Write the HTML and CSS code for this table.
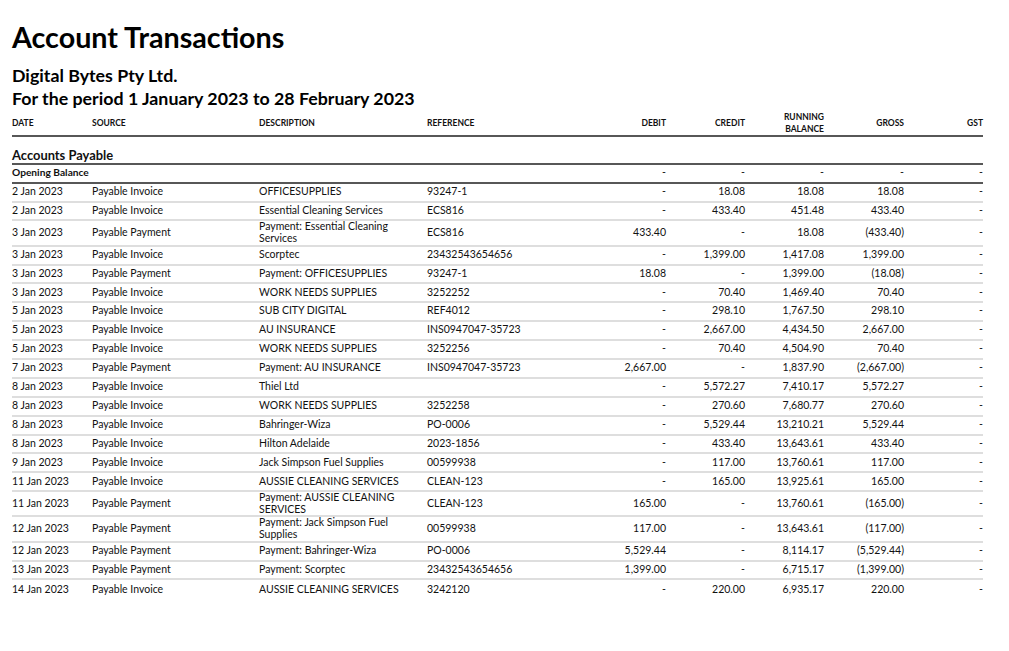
FILE: index.html
```html
<!DOCTYPE html>
<html lang="en">
<head>
<meta charset="utf-8">
<title>Account Transactions</title>
<link rel="stylesheet" href="styles.css">
</head>
<body>
<div class="report">
  <h1 class="title">Account Transactions</h1>
  <div class="subtitle">Digital Bytes Pty Ltd.</div>
  <div class="subtitle">For the period 1 January 2023 to 28 February 2023</div>
  <table class="tx">
    <colgroup>
      <col class="c-date"><col class="c-source"><col class="c-desc"><col class="c-ref">
      <col class="c-num"><col class="c-num"><col class="c-num"><col class="c-gross"><col class="c-num">
    </colgroup>
    <thead>
      <tr>
        <th>Date</th><th>Source</th><th>Description</th><th>Reference</th>
        <th class="num">Debit</th><th class="num">Credit</th><th class="num">Running<br>Balance</th><th class="num">Gross</th><th class="num">GST</th>
      </tr>
    </thead>
    <tbody>
      <tr class="section"><td colspan="9">Accounts Payable</td></tr>
      <tr class="opening"><td colspan="4">Opening Balance</td><td class="num">-</td><td class="num">-</td><td class="num">-</td><td class="num">-</td><td class="num">-</td></tr>
      <tr><td>2 Jan 2023</td><td>Payable Invoice</td><td>OFFICESUPPLIES</td><td>93247-1</td><td class="num">-</td><td class="num">18.08</td><td class="num">18.08</td><td class="num">18.08</td><td class="num">-</td></tr>
      <tr><td>2 Jan 2023</td><td>Payable Invoice</td><td>Essential Cleaning Services</td><td>ECS816</td><td class="num">-</td><td class="num">433.40</td><td class="num">451.48</td><td class="num">433.40</td><td class="num">-</td></tr>
      <tr class="wrap"><td>3 Jan 2023</td><td>Payable Payment</td><td>Payment: Essential Cleaning<br>Services</td><td>ECS816</td><td class="num">433.40</td><td class="num">-</td><td class="num">18.08</td><td class="num">(433.40)</td><td class="num">-</td></tr>
      <tr><td>3 Jan 2023</td><td>Payable Invoice</td><td>Scorptec</td><td>23432543654656</td><td class="num">-</td><td class="num">1,399.00</td><td class="num">1,417.08</td><td class="num">1,399.00</td><td class="num">-</td></tr>
      <tr><td>3 Jan 2023</td><td>Payable Payment</td><td>Payment: OFFICESUPPLIES</td><td>93247-1</td><td class="num">18.08</td><td class="num">-</td><td class="num">1,399.00</td><td class="num">(18.08)</td><td class="num">-</td></tr>
      <tr><td>3 Jan 2023</td><td>Payable Invoice</td><td>WORK NEEDS SUPPLIES</td><td>3252252</td><td class="num">-</td><td class="num">70.40</td><td class="num">1,469.40</td><td class="num">70.40</td><td class="num">-</td></tr>
      <tr><td>5 Jan 2023</td><td>Payable Invoice</td><td>SUB CITY DIGITAL</td><td>REF4012</td><td class="num">-</td><td class="num">298.10</td><td class="num">1,767.50</td><td class="num">298.10</td><td class="num">-</td></tr>
      <tr><td>5 Jan 2023</td><td>Payable Invoice</td><td>AU INSURANCE</td><td>INS0947047-35723</td><td class="num">-</td><td class="num">2,667.00</td><td class="num">4,434.50</td><td class="num">2,667.00</td><td class="num">-</td></tr>
      <tr><td>5 Jan 2023</td><td>Payable Invoice</td><td>WORK NEEDS SUPPLIES</td><td>3252256</td><td class="num">-</td><td class="num">70.40</td><td class="num">4,504.90</td><td class="num">70.40</td><td class="num">-</td></tr>
      <tr><td>7 Jan 2023</td><td>Payable Payment</td><td>Payment: AU INSURANCE</td><td>INS0947047-35723</td><td class="num">2,667.00</td><td class="num">-</td><td class="num">1,837.90</td><td class="num">(2,667.00)</td><td class="num">-</td></tr>
      <tr><td>8 Jan 2023</td><td>Payable Invoice</td><td>Thiel Ltd</td><td></td><td class="num">-</td><td class="num">5,572.27</td><td class="num">7,410.17</td><td class="num">5,572.27</td><td class="num">-</td></tr>
      <tr><td>8 Jan 2023</td><td>Payable Invoice</td><td>WORK NEEDS SUPPLIES</td><td>3252258</td><td class="num">-</td><td class="num">270.60</td><td class="num">7,680.77</td><td class="num">270.60</td><td class="num">-</td></tr>
      <tr><td>8 Jan 2023</td><td>Payable Invoice</td><td>Bahringer-Wiza</td><td>PO-0006</td><td class="num">-</td><td class="num">5,529.44</td><td class="num">13,210.21</td><td class="num">5,529.44</td><td class="num">-</td></tr>
      <tr><td>8 Jan 2023</td><td>Payable Invoice</td><td>Hilton Adelaide</td><td>2023-1856</td><td class="num">-</td><td class="num">433.40</td><td class="num">13,643.61</td><td class="num">433.40</td><td class="num">-</td></tr>
      <tr><td>9 Jan 2023</td><td>Payable Invoice</td><td>Jack Simpson Fuel Supplies</td><td>00599938</td><td class="num">-</td><td class="num">117.00</td><td class="num">13,760.61</td><td class="num">117.00</td><td class="num">-</td></tr>
      <tr><td>11 Jan 2023</td><td>Payable Invoice</td><td>AUSSIE CLEANING SERVICES</td><td>CLEAN-123</td><td class="num">-</td><td class="num">165.00</td><td class="num">13,925.61</td><td class="num">165.00</td><td class="num">-</td></tr>
      <tr class="wrap"><td>11 Jan 2023</td><td>Payable Payment</td><td>Payment: AUSSIE CLEANING<br>SERVICES</td><td>CLEAN-123</td><td class="num">165.00</td><td class="num">-</td><td class="num">13,760.61</td><td class="num">(165.00)</td><td class="num">-</td></tr>
      <tr class="wrap"><td>12 Jan 2023</td><td>Payable Payment</td><td>Payment: Jack Simpson Fuel<br>Supplies</td><td>00599938</td><td class="num">117.00</td><td class="num">-</td><td class="num">13,643.61</td><td class="num">(117.00)</td><td class="num">-</td></tr>
      <tr><td>12 Jan 2023</td><td>Payable Payment</td><td>Payment: Bahringer-Wiza</td><td>PO-0006</td><td class="num">5,529.44</td><td class="num">-</td><td class="num">8,114.17</td><td class="num">(5,529.44)</td><td class="num">-</td></tr>
      <tr><td>13 Jan 2023</td><td>Payable Payment</td><td>Payment: Scorptec</td><td>23432543654656</td><td class="num">1,399.00</td><td class="num">-</td><td class="num">6,715.17</td><td class="num">(1,399.00)</td><td class="num">-</td></tr>
      <tr class="last"><td>14 Jan 2023</td><td>Payable Invoice</td><td>AUSSIE CLEANING SERVICES</td><td>3242120</td><td class="num">-</td><td class="num">220.00</td><td class="num">6,935.17</td><td class="num">220.00</td><td class="num">-</td></tr>
    </tbody>
  </table>
</div>
</body>
</html>
```

FILE: styles.css
```css
html, body {
  margin: 0;
  padding: 0;
  background: #ffffff;
}

body {
  font-family: "Lato", "Open Sans", sans-serif;
  color: #111111;
}

.report {
  padding: 20px 26px 20px 12px;
}

.title {
  margin: 0;
  font-size: 28.7px;
  line-height: 34px;
  font-weight: 700;
  color: #000000;
}

.title + .subtitle {
  margin-top: 9.5px;
}

.subtitle {
  font-size: 17.8px;
  line-height: 23.7px;
  font-weight: 700;
  color: #000000;
}

.tx {
  width: 971px;
  table-layout: fixed;
  border-collapse: separate;
  border-spacing: 0;
  font-size: 10.5px;
}

.c-date { width: 80px; }
.c-source { width: 167px; }
.c-desc { width: 168px; }
.c-ref { width: 160px; }
.c-num { width: 79px; }
.c-gross { width: 80px; }

.tx th {
  box-sizing: border-box;
  height: 23px;
  padding: 0;
  font-size: 8.5px;
  line-height: 12px;
  font-weight: 700;
  text-transform: uppercase;
  text-align: left;
  vertical-align: middle;
  color: #111111;
  border-bottom: 2px solid #575757;
}

.tx td {
  box-sizing: border-box;
  height: 18.9px;
  padding: 0 0 1px;
  line-height: 11.6px;
  vertical-align: middle;
  white-space: nowrap;
  border-bottom: 2px solid #dedede;
}

.tx .wrap td {
  padding: 0;
  line-height: 11.6px;
}

.tx .num {
  text-align: right;
}

.tx .section td {
  height: 28px;
  vertical-align: bottom;
  padding-bottom: 1px;
  font-size: 12.9px;
  line-height: 14px;
  font-weight: 700;
  border-bottom-color: #575757;
}

.tx .opening td {
  height: 18.8px;
  font-weight: 700;
  font-size: 10.2px;
  border-bottom-color: #575757;
}

.tx .opening td.num {
  font-weight: 400;
  font-size: 10.5px;
}

.tx .last td {
  border-bottom: none;
}
```
